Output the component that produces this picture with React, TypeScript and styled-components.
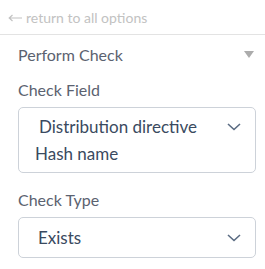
import React from "react"
import styled, { createGlobalStyle } from "styled-components"

const GlobalStyle = createGlobalStyle`
  body {
    margin: 0;
    background: #fff;
    font-family: Lato, "Open Sans", sans-serif;
  }
`

const Sidebar = styled.div`
  width: 265px;
`

const BackLink = styled.div`
  height: 35px;
  box-sizing: border-box;
  padding: 1px 8px 0;
  display: flex;
  align-items: center;
  gap: 4px;
  font-size: 14px;
  color: #c2c2c2;
  border-bottom: 1px solid #e3e3e3;
`

const Panel = styled.div`
  padding: 9px 9px 0 18px;
`

const Header = styled.div`
  display: flex;
  align-items: center;
  justify-content: space-between;
  height: 20px;
  font-size: 16px;
  color: #5b6270;
  margin-bottom: 16px;
`

const Caret = styled.span`
  width: 0;
  height: 0;
  margin-right: 2px;
  border-left: 5px solid transparent;
  border-right: 5px solid transparent;
  border-top: 7px solid #acacac;
`

const Label = styled.div`
  font-size: 16px;
  line-height: 20px;
  color: #5b6270;
  margin-bottom: 7px;
`

const Field = styled.div`
  margin-bottom: 17px;
`

const Select = styled.div<{ $multi?: boolean }>`
  box-sizing: border-box;
  border: 1px solid #cdd2d9;
  border-radius: 5px;
  display: flex;
  align-items: ${(p) => (p.$multi ? "flex-start" : "center")};
  justify-content: space-between;
  padding: ${(p) => (p.$multi ? "5px 14px 5px 0" : "0 14px 0 0")};
  height: ${(p) => (p.$multi ? "66px" : "41px")};
  color: #3a4a60;
  font-size: 17px;
  line-height: 27px;
`

const Values = styled.div`
  display: flex;
  flex-direction: column;
`

const Value = styled.span<{ $indent: number }>`
  padding-left: ${(p) => p.$indent}px;
`

const ChevronBox = styled.span`
  display: flex;
  align-items: center;
  height: 27px;
`

const Chevron = () => (
  <ChevronBox>
    <svg width="14" height="8" viewBox="0 0 14 8">
      <path d="M1 1l6 5.5L13 1" fill="none" stroke="#5a6b82" strokeWidth="1.6" />
    </svg>
  </ChevronBox>
)

const BackArrow = () => (
  <svg width="14" height="8" viewBox="0 0 14 8">
    <path d="M14 4H1.5M4.5 1L1.2 4l3.3 3" fill="none" stroke="#c2c2c2" strokeWidth="1.2" />
  </svg>
)

export default function App() {
  return (
    <Sidebar>
      <GlobalStyle />
      <BackLink>
        <BackArrow />
        <span>return to all options</span>
      </BackLink>
      <Panel>
        <Header>
          <span>Perform Check</span>
          <Caret />
        </Header>
        <Field>
          <Label>Check Field</Label>
          <Select $multi>
            <Values>
              <Value $indent={20}>Distribution directive</Value>
              <Value $indent={16}>Hash name</Value>
            </Values>
            <Chevron />
          </Select>
        </Field>
        <Field>
          <Label>Check Type</Label>
          <Select>
            <Value $indent={19}>Exists</Value>
            <Chevron />
          </Select>
        </Field>
      </Panel>
    </Sidebar>
  )
}
